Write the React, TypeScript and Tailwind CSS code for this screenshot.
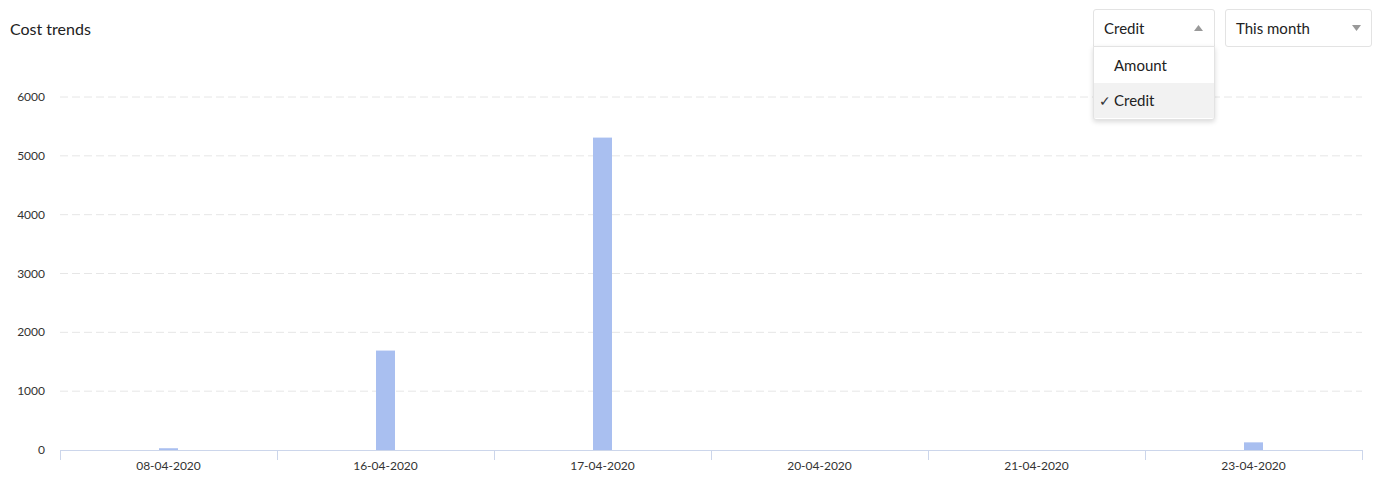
import { useState } from 'react'

// 成本趋势图 - 按日期显示 credit 消耗
const data = [
  { date: '08-04-2020', value: 30 },
  { date: '16-04-2020', value: 1690 },
  { date: '17-04-2020', value: 5310 },
  { date: '20-04-2020', value: 0 },
  { date: '21-04-2020', value: 0 },
  { date: '23-04-2020', value: 130 },
]

const TOP = 55
const left = 60
const right = 1362
const base = 450 - TOP
const perUnit = (450 - 97) / 6000

function Caret({ up }: { up?: boolean }) {
  return (
    <svg width="9" height="6" viewBox="0 0 9 6" className="text-[#999]">
      {up ? <path d="M0 6 L4.5 0 L9 6 Z" fill="currentColor" /> : <path d="M0 0 L4.5 6 L9 0 Z" fill="currentColor" />}
    </svg>
  )
}

function Chart() {
  const step = (right - left) / data.length
  const ticks = [0, 1000, 2000, 3000, 4000, 5000, 6000]
  return (
    <svg width="1391" height="430" className="block" style={{ fontFamily: 'Lato, sans-serif' }}>
      {ticks.map(t => {
        const y = base - t * perUnit
        return (
          <g key={t}>
            {t > 0 && <line x1={left} x2={right} y1={y} y2={y} stroke="#e6e6e6" strokeDasharray="8 4" strokeWidth="1" />}
            <text x="45" y={y + 4} textAnchor="end" fontSize="12" fill="#333">{t}</text>
          </g>
        )
      })}
      {data.map((d, i) => {
        const cx = left + step * (i + 0.5)
        const h = d.value * perUnit
        return (
          <g key={d.date}>
            {h > 0 && <rect x={cx - 9.5} y={base - h} width="19" height={h} fill="#a9bff0" />}
            <text x={cx} y={base + 20} textAnchor="middle" fontSize="12" fill="#333">{d.date}</text>
          </g>
        )
      })}
      <line x1={left} x2={right} y1={base + 0.5} y2={base + 0.5} stroke="#ccd6eb" />
      {Array.from({ length: data.length + 1 }).map((_, i) => {
        const x = Math.round(left + step * i) + 0.5
        return <line key={i} x1={x} x2={x} y1={base} y2={base + 10} stroke="#ccd6eb" />
      })}
    </svg>
  )
}

export default function App() {
  const [metric, setMetric] = useState('Credit')
  const [open] = useState(true)

  return (
    <div className="w-[1391px] h-[485px] bg-white overflow-hidden" style={{ fontFamily: 'Lato, "Open Sans", sans-serif' }}>
      <div className="flex justify-between items-start pt-[9px] pl-[10px] pr-[19px] h-[55px]">
        <h2 className="text-[16px] text-[#222] mt-[8px]">Cost trends</h2>
        <div className="flex gap-[10px]">
          <div className="relative">
            <button className="w-[122px] h-[38px] border border-[#e3e3e3] rounded-t-[3px] flex items-center justify-between pl-[10px] pr-[11px] text-[15px] text-[#222] bg-white">
              {metric}
              <Caret up />
            </button>
            {open && (
              <div className="absolute left-0 top-[37px] w-[122px] bg-white border border-[#e3e3e3] rounded-b-[3px] shadow-[0_2px_5px_rgba(0,0,0,0.15)] z-10 py-px">
                {['Amount', 'Credit'].map(o => (
                  <div
                    key={o}
                    onClick={() => setMetric(o)}
                    className={`h-[35px] flex items-center pl-[5px] text-[15px] text-[#222] ${o === metric ? 'bg-[#f2f2f2]' : ''}`}
                  >
                    <span className="w-[15px] text-[14px] text-[#333]">{o === metric ? '✓' : ''}</span>
                    {o}
                  </div>
                ))}
              </div>
            )}
          </div>
          <button className="w-[147px] h-[38px] border border-[#e3e3e3] rounded-[3px] flex items-center justify-between pl-[10px] pr-[10px] text-[15px] text-[#222] bg-white">
            This month
            <Caret />
          </button>
        </div>
      </div>
      <Chart />
    </div>
  )
}
